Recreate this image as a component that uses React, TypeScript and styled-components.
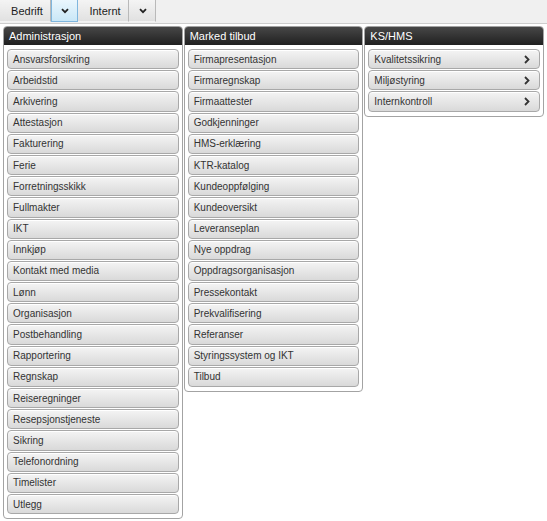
import React from "react";
import styled, { createGlobalStyle } from "styled-components";

const GlobalStyle = createGlobalStyle`
  html, body {
    margin: 0;
    padding: 0;
    background: #ffffff;
    font-family: "Liberation Sans", Arial, sans-serif;
  }
`;

interface Section {
  title: string;
  items: string[];
  withArrow?: boolean;
}

const sections: Section[] = [
  {
    title: "Administrasjon",
    items: [
      "Ansvarsforsikring",
      "Arbeidstid",
      "Arkivering",
      "Attestasjon",
      "Fakturering",
      "Ferie",
      "Forretningsskikk",
      "Fullmakter",
      "IKT",
      "Innkjøp",
      "Kontakt med media",
      "Lønn",
      "Organisasjon",
      "Postbehandling",
      "Rapportering",
      "Regnskap",
      "Reiseregninger",
      "Resepsjonstjeneste",
      "Sikring",
      "Telefonordning",
      "Timelister",
      "Utlegg",
    ],
  },
  {
    title: "Marked tilbud",
    items: [
      "Firmapresentasjon",
      "Firmaregnskap",
      "Firmaattester",
      "Godkjenninger",
      "HMS-erklæring",
      "KTR-katalog",
      "Kundeoppfølging",
      "Kundeoversikt",
      "Leveranseplan",
      "Nye oppdrag",
      "Oppdragsorganisasjon",
      "Pressekontakt",
      "Prekvalifisering",
      "Referanser",
      "Styringssystem og IKT",
      "Tilbud",
    ],
  },
  {
    title: "KS/HMS",
    items: ["Kvalitetssikring", "Miljøstyring", "Internkontroll"],
    withArrow: true,
  },
];

const TopBar = styled.div`
  display: flex;
  height: 23px;
  background: #f0f0f0;
  border-bottom: 1px solid #cdcdcd;
`;

const TabButton = styled.div<{ $active?: boolean; $icon?: boolean }>`
  box-sizing: border-box;
  height: 22px;
  display: flex;
  align-items: center;
  justify-content: center;
  width: ${(p) => (p.$icon ? "27px" : "51px")};
  padding-left: ${(p) => (p.$icon ? "0" : "3px")};
  font-size: 11px;
  color: #1c1c1c;
  background: ${(p) =>
    p.$active
      ? "linear-gradient(#eaf6fd, #c9e7f7)"
      : "linear-gradient(#f4f4f4, #e1e1e1)"};
  border: 1px solid ${(p) => (p.$active ? "#7fb6de" : "transparent")};
  border-right: 1px solid ${(p) => (p.$active ? "#7fb6de" : "#b9b9b9")};
  border-top: none;
`;

const Columns = styled.div`
  display: flex;
  align-items: flex-start;
  gap: 1px;
  padding: 2px 3px 0;
`;

const Panel = styled.div`
  box-sizing: border-box;
  width: 180px;
  border: 1px solid #a3a3a3;
  border-radius: 4px;
  background: #ffffff;
  padding-bottom: 4px;
  overflow: hidden;
`;

const PanelHeader = styled.div`
  height: 18px;
  line-height: 18px;
  padding-left: 5px;
  font-size: 11px;
  color: #ffffff;
  background: linear-gradient(#474747, #202020);
`;

const List = styled.div`
  padding: 4px 3px 0;
`;

const Row = styled.div`
  box-sizing: border-box;
  height: 20.2px;
  margin-bottom: 1px;
  display: flex;
  align-items: center;
  justify-content: space-between;
  padding: 0 9px 0 5px;
  font-size: 10px;
  color: #333333;
  border: 1px solid #a8a8a8;
  border-radius: 4px;
  background: linear-gradient(#f4f4f4, #d9d9d9);
  box-shadow: inset 0 1px 0 #ffffff;

  &:last-child {
    margin-bottom: 0;
  }
`;

const ChevronDown = () => (
  <svg width="8" height="6" viewBox="0 0 8 6">
    <path d="M1 1.2 L4 4.2 L7 1.2" fill="none" stroke="#222" strokeWidth="1.8" />
  </svg>
);

const ChevronRight = () => (
  <svg width="6" height="9" viewBox="0 0 6 9">
    <path d="M1 1 L4.5 4.5 L1 8" fill="none" stroke="#333" strokeWidth="1.8" />
  </svg>
);

export default function App() {
  return (
    <>
      <GlobalStyle />
      <TopBar>
        <TabButton>Bedrift</TabButton>
        <TabButton $icon $active>
          <ChevronDown />
        </TabButton>
        <TabButton>Internt</TabButton>
        <TabButton $icon>
          <ChevronDown />
        </TabButton>
      </TopBar>
      <Columns>
        {sections.map((section) => (
          <Panel key={section.title}>
            <PanelHeader>{section.title}</PanelHeader>
            <List>
              {section.items.map((item) => (
                <Row key={item}>
                  <span>{item}</span>
                  {section.withArrow && <ChevronRight />}
                </Row>
              ))}
            </List>
          </Panel>
        ))}
      </Columns>
    </>
  );
}
